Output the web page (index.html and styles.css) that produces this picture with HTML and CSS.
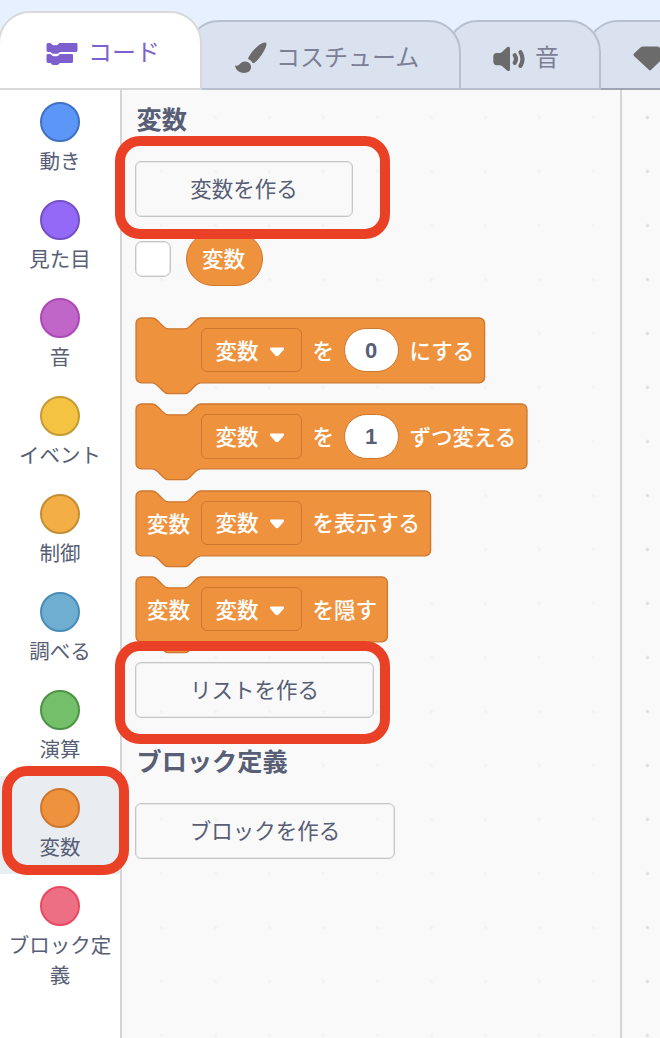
FILE: index.html
```html
<!DOCTYPE html>
<html lang="ja">
<head>
<meta charset="utf-8">
<title>コード</title>
<link rel="stylesheet" href="styles.css">
</head>
<body>
<svg class="defs" width="0" height="0">
  <defs>
    <path id="arrow" d="M1.2 0.6H12.8C14 0.6 14.4 2 13.5 3L8.6 8.4Q7 10 5.4 8.4L0.5 3C-0.4 2 0 0.6 1.2 0.6Z"/>
  </defs>
</svg>
<div class="app">
  <nav class="tabs">
    <div class="tab tab-code">
      <svg class="ico-code" width="32" height="24" viewBox="0 0 32 24"><path d="M2 1H4C5.500 1 5.500 3.200 7.500 3.200H10.500C12.500 3.200 12.500 1 14 1H30.200Q31.500 1 31.500 2.300V8.500Q31.500 9.900 30.200 9.900H14.500C13 9.900 13 11.700 11 11.700H7.500C5.500 11.700 5.500 9.900 4 9.900H2Q.5 9.900 .5 8.500V2.500Q.5 1 2 1ZM2 12.100H4C5.500 12.100 5.500 14.200 7.500 14.200H11C13 14.200 13 12.100 14.500 12.100H25.700Q27 12.100 27 13.500V19.500Q27 20.900 25.700 20.900H14.500C13 20.900 13 23 11 23H7.500C5.500 23 5.500 20.900 4 20.900H2Q.5 20.900 .5 19.500V13.500Q.5 12.100 2 12.100Z"/></svg>
      <span>コード</span>
    </div>
    <div class="tab tab-costume">
      <svg width="32" height="32" viewBox="0 0 32 32"><path d="M31 .8C32.200 2 31 5 29 9C26 14.500 22.500 18.500 19.500 20.800C18.500 21.500 17.500 21 17 20.200C16.200 18.800 15.200 18 13.800 17.600C13 17.200 13 16.400 13.400 15.600C15.500 11 20 6 24.500 2.800C27.500 1 30 0 31 .8ZM.3 23.600C1.500 24 3.500 23.600 4.800 22C7 19 11 18.800 13.600 20.400C16.800 22.600 16.900 27 14 29.600C10 32.200 1.500 31 .2 24.600Q0 23.500 .3 23.600Z"/></svg>
      <span>コスチューム</span>
    </div>
    <div class="tab tab-sound">
      <svg width="32" height="26" viewBox="0 0 32 26"><path d="M14 1.200C15.500 .2 17 1 17 2.500V23.500C17 25 15.500 25.600 14 24.500L9 20Q8 19.200 7 19.200H3.500C1.500 19.200 .3 17.500 .3 15.500V10.500C.3 8.500 1.500 7 3.500 7H7Q8 7 9 6Z"/><path class="wave" d="M21.800 9.300Q24.200 13 21.800 16.900M27.500 6.200Q31.500 13 27.500 19.900"/></svg>
      <span>音</span>
    </div>
    <div class="tab tab-extra">
      <svg width="34" height="26" viewBox="0 0 34 26"><path d="M7.500 1.500Q8.500.6 10 .6H24Q25.500.6 26.500 1.500L32.500 7.500Q33.500 8.700 32.500 9.900L18.200 23.800Q17 25 15.800 23.800L1 9.900Q0 8.700 1 7.500Z"/></svg>
    </div>
  </nav>
  <main class="editor">
    <ul class="categories">
      <li class="category"><i class="dot motion"></i><span>動き</span></li>
      <li class="category"><i class="dot looks"></i><span>見た目</span></li>
      <li class="category"><i class="dot sound"></i><span>音</span></li>
      <li class="category"><i class="dot events"></i><span>イベント</span></li>
      <li class="category"><i class="dot control"></i><span>制御</span></li>
      <li class="category"><i class="dot sensing"></i><span>調べる</span></li>
      <li class="category"><i class="dot operators"></i><span>演算</span></li>
      <li class="category selected"><i class="dot variables"></i><span>変数</span></li>
      <li class="category"><i class="dot custom"></i><span>ブロック定義</span></li>
    </ul>
    <section class="flyout">
      <h2>変数</h2>
      <button class="make make-variable">変数を作る</button>
      <div class="reporter-row"><span class="checkbox"></span><span class="reporter">変数</span></div>
      <div class="blocks">
        <div class="block">
          <svg class="shape" width="352" height="78" viewBox="-.75 -.75 260.740 57.780"><path d="M0 4A4 4 0 0 1 4 0H12c2 0 3 1 4 2l4 4c1 1 2 2 4 2h12c2 0 3-1 4-2l4-4c1-1 2-2 4-2H254.200a4 4 0 0 1 4 4v40a4 4 0 0 1-4 4H48c-2 0-3 1-4 2l-4 4c-1 1-2 2-4 2h-12c-2 0-3-1-4-2l-4-4c-1-1-2-2-4-2H4a4 4 0 0 1-4-4z"/></svg>
          <div class="content"><span class="lead"></span><span class="dropdown">変数<svg width="14" height="10"><use href="#arrow"/></svg></span><span class="particle">を</span><span class="number">0</span><span>にする</span></div>
        </div>
        <div class="block">
          <svg class="shape" width="394" height="78" viewBox="-.75 -.75 291.850 57.780"><path d="M0 4A4 4 0 0 1 4 0H12c2 0 3 1 4 2l4 4c1 1 2 2 4 2h12c2 0 3-1 4-2l4-4c1-1 2-2 4-2H285.600a4 4 0 0 1 4 4v40a4 4 0 0 1-4 4H48c-2 0-3 1-4 2l-4 4c-1 1-2 2-4 2h-12c-2 0-3-1-4-2l-4-4c-1-1-2-2-4-2H4a4 4 0 0 1-4-4z"/></svg>
          <div class="content"><span class="lead"></span><span class="dropdown">変数<svg width="14" height="10"><use href="#arrow"/></svg></span><span class="particle">を</span><span class="number">1</span><span>ずつ変える</span></div>
        </div>
        <div class="block">
          <svg class="shape" width="298" height="78" viewBox="-.75 -.75 220.740 57.780"><path d="M0 4A4 4 0 0 1 4 0H12c2 0 3 1 4 2l4 4c1 1 2 2 4 2h12c2 0 3-1 4-2l4-4c1-1 2-2 4-2H214.200a4 4 0 0 1 4 4v40a4 4 0 0 1-4 4H48c-2 0-3 1-4 2l-4 4c-1 1-2 2-4 2h-12c-2 0-3-1-4-2l-4-4c-1-1-2-2-4-2H4a4 4 0 0 1-4-4z"/></svg>
          <div class="content"><span class="lead">変数</span><span class="dropdown">変数<svg width="14" height="10"><use href="#arrow"/></svg></span><span>を表示する</span></div>
        </div>
        <div class="block">
          <svg class="shape" width="254" height="78" viewBox="-.75 -.75 188.150 57.780"><path d="M0 4A4 4 0 0 1 4 0H12c2 0 3 1 4 2l4 4c1 1 2 2 4 2h12c2 0 3-1 4-2l4-4c1-1 2-2 4-2H182.200a4 4 0 0 1 4 4v40a4 4 0 0 1-4 4H48c-2 0-3 1-4 2l-4 4c-1 1-2 2-4 2h-12c-2 0-3-1-4-2l-4-4c-1-1-2-2-4-2H4a4 4 0 0 1-4-4z"/></svg>
          <div class="content"><span class="lead">変数</span><span class="dropdown">変数<svg width="14" height="10"><use href="#arrow"/></svg></span><span>を隠す</span></div>
        </div>
      </div>
      <button class="make make-list">リストを作る</button>
      <h2>ブロック定義</h2>
      <button class="make make-block">ブロックを作る</button>
    </section>
    <section class="workspace"></section>
  </main>
  <div class="mark mark-variable"></div>
  <div class="mark mark-list"></div>
  <div class="mark mark-category"></div>
</div>
</body>
</html>
```
FILE: styles.css
```css
* { box-sizing: border-box; }
body {
  margin: 0;
  font-family: "Noto Sans CJK JP", sans-serif;
  color: #575e75;
}
.defs { display: block; }
.app {
  position: relative;
  width: 660px;
  height: 1038px;
  overflow: hidden;
  display: flex;
  flex-direction: column;
}

/* Tabs */
.tabs {
  flex: none;
  height: 90px;
  display: flex;
  align-items: flex-end;
  background: #e6f0ff;
  box-shadow: inset 0 -2px #9da5b5;
}
.tab {
  position: relative;
  flex: none;
  display: flex;
  align-items: center;
  height: 70px;
  margin-left: -15px;
  border: 2px solid #b8c0cf;
  border-radius: 32px 32px 0 0;
  background: #dbe2ef;
  color: #7b8096;
  font-size: 24px;
  line-height: 32px;
  white-space: nowrap;
}
.tab svg { flex: none; fill: #6b6b6b; }
.tab .wave { fill: none; stroke: #6b6b6b; stroke-width: 4.2; stroke-linecap: round; }
.tab-code {
  z-index: 4;
  width: 204px;
  height: 79px;
  margin-left: -2px;
  padding: 2px 0 0 46px;
  gap: 10px;
  background: #fff;
  border-color: #d9d9d9;
  color: #7d5fcd;
}
.tab-code .ico-code { fill: #7d5fcd; margin-top: 4px; }
.tab-code span { margin-top: -2px; }
.tab-costume { z-index: 3; width: 274px; padding: 5px 0 0 46px; gap: 9px; }
.tab-costume span { margin-top: -3px; }
.tab-sound { z-index: 2; width: 155px; padding: 8px 0 0 45px; gap: 10px; }
.tab-sound span { margin-top: -6px; }
.tab-extra { z-index: 1; width: 150px; padding: 8px 0 0 45px; border-bottom-color: #9da5b5; }

/* Category list */
.editor { flex: 1; display: flex; min-height: 0; }
.categories {
  flex: none;
  width: 122px;
  margin: 0;
  padding: 0;
  list-style: none;
  border-right: 2px solid #d5d5d5;
  background: #fff;
}
.category {
  display: flex;
  flex-direction: column;
  align-items: center;
  gap: 3px;
  padding: 12px 6px 13px;
  font-size: 20.5px;
  line-height: 30px;
  text-align: center;
}
.selected { background: #e9edf2; }
.dot { flex: none; width: 40px; height: 40px; border: 2px solid; border-radius: 50%; }
.motion { background: #5c97f7; border-color: #4170c4; }
.looks { background: #9469f8; border-color: #7350c4; }
.sound { background: #bf66c8; border-color: #ae48b8; }
.events { background: #f5c342; border-color: #c49b34; }
.control { background: #f3ae45; border-color: #c58d34; }
.sensing { background: #6fadd1; border-color: #498db7; }
.operators { background: #74bf6a; border-color: #4d9345; }
.variables { background: #ef923d; border-color: #cd772f; }
.custom { background: #ed6f83; border-color: #eb4961; }

/* Flyout */
.flyout, .workspace {
  background-color: #f9f9f9;
  background-size: 54px 54px;
}
.flyout {
  flex: none;
  width: 500px;
  padding: 10px 0 0 13px;
  border-right: 2px solid #d5d5d5;
  background-image: radial-gradient(circle, #f0f0f1 1px, transparent 2px);
  background-position: 12.500px .5px;
}
.workspace {
  flex: 1;
  background-image: radial-gradient(circle, #d9d9da 1px, transparent 2px);
  background-position: -1.500px .5px;
}
h2 {
  margin: 0 0 0 1.500px;
  font-size: 25.200px;
  line-height: 36px;
  font-weight: 700;
}
.make {
  display: block;
  height: 56px;
  padding: 0 0 2px;
  border: 1px solid #c6c6c8;
  border-radius: 6px;
  box-shadow: inset 0 0 0 1px #e9e9ea;
  background: transparent;
  color: #575e75;
  font: 21.500px/32px "Noto Sans CJK JP", sans-serif;
}
.make-variable { width: 218px; margin-top: 25px; }
.make-list { width: 239px; margin-top: 8px; }
.make-block { width: 260px; margin-top: 25px; }
.make-list + h2 { margin-top: 24px; }
.reporter-row {
  display: flex;
  align-items: center;
  gap: 15px;
  height: 54px;
  margin-top: 15px;
}
.checkbox {
  width: 36px;
  height: 36px;
  border: 1px solid #c6c6c8;
  border-radius: 7px;
  box-shadow: inset 0 0 0 1px #e9e9ea;
  background: #fff;
}
.reporter {
  width: 77px;
  height: 54px;
  padding-left: 15px;
  border: 1.350px solid #cd772f;
  border-radius: 27px;
  background: #ef923d;
  color: #fff;
  font-size: 21.600px;
  font-weight: 500;
  line-height: 50px;
}

/* Stack blocks */
.blocks { display: flex; flex-direction: column; gap: 8.400px; margin-top: 31px; }
.block { display: grid; height: 78px; justify-items: start; }
.block > * { grid-area: 1 / 1; }
.shape { display: block; }
.shape path { fill: #ef923d; stroke: #cd772f; stroke-width: 1; }
.content {
  display: flex;
  align-items: center;
  height: 66px;
  padding-left: 12px;
  color: #fff;
  font-size: 21.500px;
  font-weight: 500;
  line-height: 32px;
  white-space: nowrap;
}
.content > span:last-child, .particle { margin-top: -1px; }
.lead { width: 53.500px; }
.dropdown {
  display: flex;
  align-items: center;
  gap: 11px;
  width: 101px;
  height: 44.500px;
  padding: 0 0 1px 14px;
  margin-right: 11px;
  border: 1.350px solid #cd772f;
  border-radius: 6px;
}
.dropdown svg { fill: #fff; margin-top: 4px; }
.particle { width: 31px; }
.number {
  width: 55px;
  height: 44.500px;
  margin-right: 11px;
  border: 1.350px solid #cd772f;
  border-radius: 23px;
  background: #fff;
  color: #575e75;
  font: 700 22px/44px "Liberation Sans", sans-serif;
  text-align: center;
}

/* Highlight frames over the editor */
.mark { position: absolute; z-index: 10; border: 10px solid #ea4025; border-radius: 25px; }
.mark-variable { left: 115px; top: 136px; width: 275px; height: 103px; }
.mark-list { left: 115px; top: 641px; width: 275px; height: 103px; }
.mark-category { left: 2px; top: 766px; width: 127px; height: 109px; }
```
